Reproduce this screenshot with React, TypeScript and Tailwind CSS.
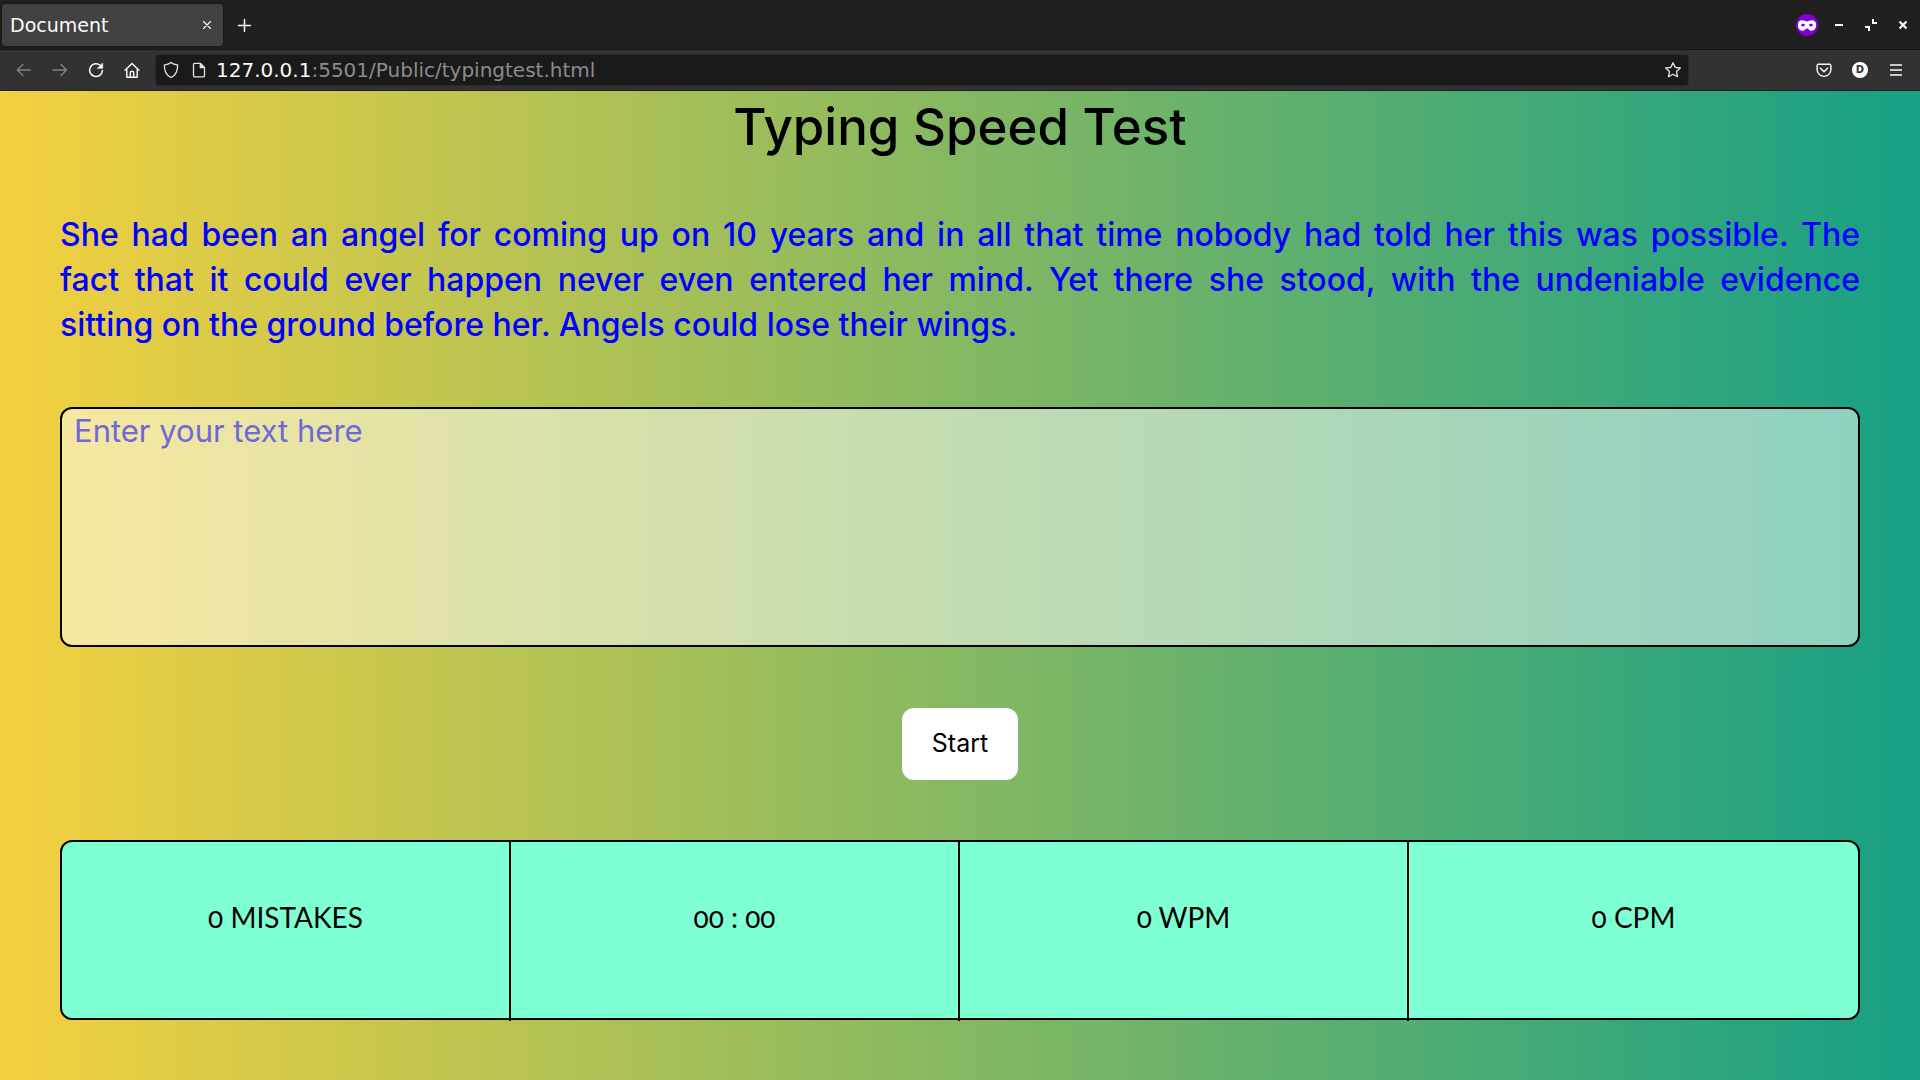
import React from "react";

type IconButtonProps = {
  label: string;
  className?: string;
  children: React.ReactNode;
};

function IconButton({ label, className = "w-9", children }: IconButtonProps) {
  return (
    <button type="button" aria-label={label} className={`flex h-8 shrink-0 items-center justify-center ${className}`}>
      {children}
    </button>
  );
}

function Icon({ children, className = "text-[#fbfbfe]" }: { children: React.ReactNode; className?: string }) {
  return (
    <svg
      width="18"
      height="18"
      viewBox="0 0 18 18"
      fill="none"
      stroke="currentColor"
      strokeWidth="1.3"
      strokeLinecap="round"
      strokeLinejoin="round"
      aria-hidden="true"
      className={`shrink-0 ${className}`}
    >
      {children}
    </svg>
  );
}

function TabStrip() {
  return (
    <div className="flex h-[50px] items-center border-b border-[#151515] bg-[#202020] pl-0.5 pr-px">
      <div className="flex h-[42px] w-[221px] items-center justify-between rounded bg-[#424242] pl-2 shadow-[0_0_3px_rgba(0,0,0,0.5)]">
        <span className="text-[19px] leading-6 text-[#fbfbfe]">Document</span>
        <IconButton label="Close tab" className="w-8">
          <Icon>
            <path d="M5.5 5.5l7 7M12.5 5.5l-7 7" strokeWidth="1.1" />
          </Icon>
        </IconButton>
      </div>
      <IconButton label="New tab" className="w-[42px]">
        <Icon>
          <path d="M9.500 3.500v12M3.500 9.500h12" strokeWidth="1.500" />
        </Icon>
      </IconButton>
      <div className="ml-auto flex items-center">
        <span role="img" aria-label="Private browsing" className="flex w-8 justify-center">
          <svg width="22" height="22" viewBox="0 0 22 22" aria-hidden="true">
            <circle cx="11" cy="11" r="11" fill="#8000d7" />
            <path
              fill="#fff"
              fillRule="evenodd"
              d="M1.900 11c0-2.900 1.500-4.700 4.300-4.700 2 0 3.300 1.200 4.800 1.200s2.800-1.200 4.800-1.200c2.800 0 4.300 1.800 4.300 4.700 0 3.300-1.700 5.700-4.400 5.700-2.200 0-3.200-2.300-4.700-2.300s-2.500 2.300-4.700 2.300c-2.700 0-4.400-2.400-4.400-5.700zM4.900 11c.6 1 1.400 1.400 2.200 1.400s1.600-.5 2.100-1.400c-.5-.9-1.300-1.300-2.100-1.300s-1.600.4-2.200 1.300zm7.900 0c.5.9 1.300 1.400 2.100 1.400s1.600-.4 2.200-1.400c-.6-.9-1.400-1.300-2.200-1.300s-1.600.4-2.100 1.300z"
            />
          </svg>
        </span>
        <IconButton label="Minimize" className="w-8">
          <Icon>
            <path d="M5 9h8" strokeWidth="2" strokeLinecap="butt" />
          </Icon>
        </IconButton>
        <IconButton label="Restore" className="w-8">
          <Icon>
            <path d="M11 3v4h4M3 11h4v4" strokeWidth="2" strokeLinecap="butt" strokeLinejoin="miter" />
          </Icon>
        </IconButton>
        <IconButton label="Close window" className="w-8">
          <Icon>
            <path d="M5.500 5.500l7 7M12.500 5.500l-7 7" strokeWidth="2.200" strokeLinecap="butt" />
          </Icon>
        </IconButton>
      </div>
    </div>
  );
}

function Toolbar() {
  return (
    <div className="flex h-[41px] items-center border-b border-[#202020] bg-[#323232] px-1.5">
      <IconButton label="Back">
        <Icon className="text-[#838383]">
          <path d="M15.500 9H2.200M8 3.500L2.200 9L8 14.500" />
        </Icon>
      </IconButton>
      <IconButton label="Forward">
        <Icon className="text-[#838383]">
          <path d="M2 9h13.500M10 3.500L15.500 9L10 14.500" />
        </Icon>
      </IconButton>
      <IconButton label="Reload">
        <Icon>
          <path d="M15.400 9.500a6.400 6.400 0 1 1-2.200-5.200l1 1" strokeWidth="1.500" />
          <path d="M15.700 2.300v5h-5z" fill="currentColor" strokeWidth="0.600" />
        </Icon>
      </IconButton>
      <IconButton label="Home">
        <Icon>
          <path d="M2 9.200L9 2.400l7 6.800M3.800 8v8.200h10.400V8M7.300 16v-4.500a1 1 0 0 1 1-1h1.400a1 1 0 0 1 1 1V16" strokeWidth="1.400" />
        </Icon>
      </IconButton>
      <div className="ml-[5px] flex h-8 flex-1 items-center rounded border border-[#2a2a2a] bg-[#1a1a1a] pl-1.5">
        <Icon className="text-[#e4e4e6]">
          <path d="M9 1.500c1.600 1.500 4 2.300 6.600 2.400.2 5.700-1.500 10.200-6.600 12.600C3.900 14.100 2.200 9.600 2.400 3.900 5 3.800 7.400 3 9 1.500z" />
        </Icon>
        <Icon className="ml-2.5 text-[#e4e4e6]">
          <path d="M4.500 2.400h6l4 4v8.200a1.200 1.200 0 0 1-1.200 1.200H4.700a1.200 1.200 0 0 1-1.200-1.200V3.400a1 1 0 0 1 1-1z" />
          <path d="M10.300 2.600v4h4z" fill="currentColor" />
        </Icon>
        <div className="ml-2 flex-1 text-[20px] leading-6 text-[#8c8c8c]">
          <span className="text-[#fbfbfe]">127.0.0.1</span>:5501/Public/typingtest.html
        </div>
        <IconButton label="Bookmark this page" className="w-[30px]">
          <Icon className="text-[#e4e4e6]">
            <path d="M9 1.700l2.200 4.700 5.100.6-3.800 3.500 1 5.200L9 13.200l-4.500 2.500 1-5.200L1.700 7l5.100-.6z" />
          </Icon>
        </IconButton>
      </div>
      <div className="ml-[117px] flex">
        <IconButton label="Save to Pocket">
          <Icon>
            <path d="M3.300 3.300h11.400a1.200 1.200 0 0 1 1.200 1.200v4a6.900 6.900 0 0 1-13.800 0v-4a1.200 1.200 0 0 1 1.200-1.200z" strokeWidth="1.400" />
            <path d="M5.500 7.300L9 10.700l3.500-3.400" strokeWidth="1.500" />
          </Icon>
        </IconButton>
        <IconButton label="Profile D">
          <span className="flex size-4 items-center justify-center rounded-full bg-white text-[10px] leading-4 font-bold text-[#323232]">
            D
          </span>
        </IconButton>
        <IconButton label="Open menu">
          <Icon>
            <path d="M3 4h12M3 9h12M3 14h12" strokeWidth="1.300" strokeLinecap="butt" />
          </Icon>
        </IconButton>
      </div>
    </div>
  );
}

const stats = ["0 MISTAKES", "00 : 00", "0 WPM", "0 CPM"];

export default function App() {
  return (
    <div className="flex min-h-screen flex-col">
      <header className="font-['DejaVu_Sans',sans-serif]">
        <TabStrip />
        <Toolbar />
      </header>
      <main className="flex-1 bg-[linear-gradient(to_right,#f4d03f,#16a085)] px-[60px] pb-[60px] font-['Inter',sans-serif] text-black">
        <h1 className="pt-[3px] text-center text-[51px] leading-[66px] font-medium">Typing Speed Test</h1>
        <p className="mt-[52px] text-justify text-[32px] leading-[45px] font-medium text-[#0000ff]">
          She had been an angel for coming up on 10 years and in all that time nobody had told her this was possible.
          The fact&nbsp;that it could ever happen never even entered her mind. Yet there she stood, with the undeniable
          evidence sitting&nbsp;on&nbsp;the ground before her. Angels could lose their wings.
        </p>
        <textarea
          aria-label="Typed text"
          placeholder="Enter your text here"
          className="mt-[60px] block h-60 w-full resize-none rounded-xl border-2 border-black bg-white/50 px-3 text-[31px] leading-[44px] placeholder:text-[#6f68d8]"
        />
        <button type="button" className="mx-auto mt-[61px] block h-[72px] rounded-xl bg-white px-[30px] text-[25px]">
          Start
        </button>
        <div className="mt-[60px] grid h-[180px] grid-cols-4 rounded-xl border-2 border-black bg-[#7fffd4] font-['Lato',sans-serif] text-[28px] leading-8 [font-variant-numeric:oldstyle-nums]">
          {stats.map((stat) => (
            <div key={stat} className="h-[179px] border-r-2 border-black pt-[59px] text-center last:border-r-0">
              {stat}
            </div>
          ))}
        </div>
      </main>
    </div>
  );
}
